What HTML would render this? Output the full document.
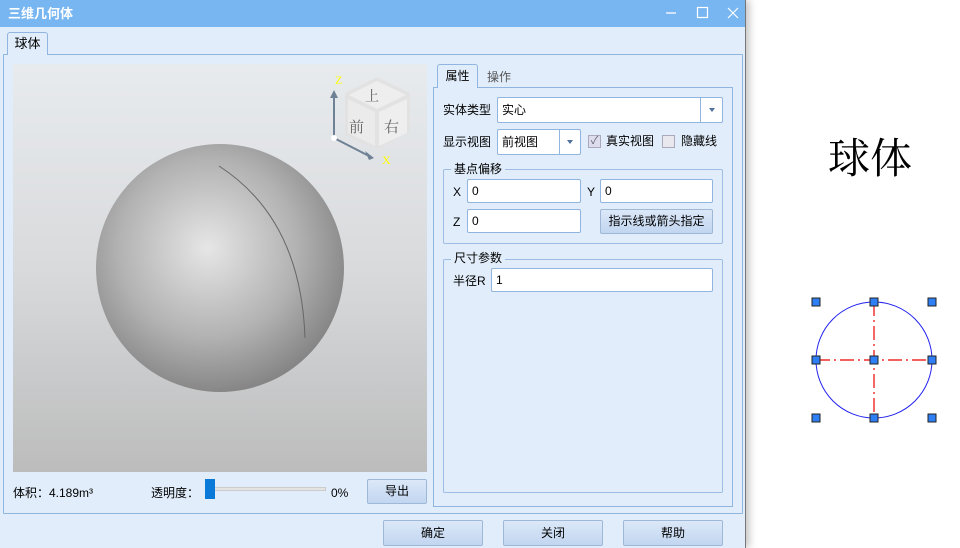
<!DOCTYPE html>
<html><head><meta charset="utf-8"><style>
*{box-sizing:border-box;margin:0;padding:0}
body{width:960px;height:548px;background:#fff;position:relative;overflow:hidden;font-family:"Liberation Sans","Noto Sans CJK SC",sans-serif;font-size:12px;color:#000}
.a{position:absolute}
.win{left:0;top:0;width:746px;height:548px;background:#e1edfa;border-right:1px solid #777;box-shadow:3px 0 8px rgba(0,0,0,.25)}
.title{left:0;top:0;width:745px;height:27px;background:#78b6f2;color:#fff;font-weight:bold;font-size:13px;line-height:27px;padding-left:8px}
.bd{border:1px solid #8fb5e0}
.inp{background:#fff;border:1px solid #8fb5e0;border-radius:2px;height:24px;line-height:22px;padding-left:4px}
.btn{border:1px solid #9fb8d8;border-radius:2px;background:linear-gradient(#dbe8f8,#c2d6f0);text-align:center;line-height:24px;height:26px}
.grp{border:1px solid #9fbde3;border-radius:2px}
.lg{background:#e1edfa;padding:0 3px}
.l{line-height:14px}
</style></head><body>
<div class="a win">
<div class="a title">三维几何体</div>
<svg class="a" style="left:0;top:0" width="745" height="27"><line x1="666" y1="13" x2="676" y2="13" stroke="#cfe3fb" stroke-width="2"/><rect x="697.5" y="7.5" width="10" height="10" fill="none" stroke="#fff" stroke-width="1.2"/><path d="M728 8l10 10M738 8l-10 10" stroke="#fff" stroke-width="1.2"/></svg>
<div class="a bd" style="left:3px;top:54px;width:740px;height:460px;border-radius:1px"></div>
<div class="a" style="left:7px;top:32px;width:41px;height:23px;border:1px solid #8fb5e0;border-bottom:none;background:#e1edfa;border-radius:3px 3px 0 0;text-align:center;line-height:22px;font-size:13px">球体</div>
<div class="a" style="left:13px;top:64px;width:414px;height:408px;background:linear-gradient(#e8ebee,#d8dadc 50%,#bcbcbc)"></div>
<svg class="a" style="left:13px;top:64px" width="414" height="408">
<defs><radialGradient id="g" cx="0.45" cy="0.42" r="0.6"><stop offset="0" stop-color="#e6e6e6"/><stop offset="0.6" stop-color="#b2b2b2"/><stop offset="1" stop-color="#838383"/></radialGradient></defs>
<circle cx="207" cy="204" r="124" fill="url(#g)"/>
<path d="M206 102 Q288 155 292 274" fill="none" stroke="#666" stroke-width="1"/>
<polygon points="364,13 397,29 397,67 364,86 332,71 332,29" fill="#e2e2e2"/>
<polygon points="364,17 393,31 364,45 336,31" fill="#eeeeee"/>
<polygon points="335,35 362,48 362,82 335,69" fill="#ebebeb"/>
<polygon points="366,48 394,35 394,69 366,82" fill="#eeeeee"/>
<text x="352" y="37" font-size="14" fill="#666" font-family="Noto Serif CJK SC,serif">上</text>
<text x="336" y="68" font-size="15" fill="#666" font-family="Noto Serif CJK SC,serif">前</text>
<text x="371" y="68" font-size="15" fill="#666" font-family="Noto Serif CJK SC,serif">右</text>
<line x1="321" y1="74" x2="321" y2="32" stroke="#6f8194" stroke-width="2"/><polygon points="317,34 325,34 321,26" fill="#6f8194"/>
<line x1="321" y1="74" x2="356" y2="92" stroke="#6f8194" stroke-width="2"/><polygon points="352,87 356,96 361,94" fill="#6f8194"/>
<circle cx="321" cy="74" r="3" fill="#fff"/>
<text x="322" y="20" font-size="12" fill="#ff0" font-family="Liberation Serif">Z</text>
<text x="369" y="100" font-size="12" fill="#ff0" font-family="Liberation Serif">X</text>
</svg>
<div class="a l" style="left:13px;top:486px">体积：4.189m³</div>
<div class="a l" style="left:151px;top:486px">透明度：</div>
<div class="a" style="left:210px;top:487px;width:116px;height:4px;background:#e4e4e4;border:1px solid #ccc"></div>
<div class="a" style="left:205px;top:479px;width:10px;height:20px;background:#0a79d8"></div>
<div class="a l" style="left:331px;top:486px">0%</div>
<div class="a btn" style="left:367px;top:479px;width:60px;height:25px;line-height:23px">导出</div>
<div class="a bd" style="left:433px;top:87px;width:300px;height:420px"></div>
<div class="a" style="left:437px;top:64px;width:41px;height:24px;border:1px solid #8fb5e0;border-bottom:none;background:#e1edfa;border-radius:3px 3px 0 0;text-align:center;line-height:23px">属性</div>
<div class="a l" style="left:487px;top:70px;color:#555">操作</div>
<div class="a l" style="left:443px;top:103px">实体类型</div>
<div class="a inp" style="left:497px;top:97px;width:226px;height:26px;line-height:24px">实心</div>
<div class="a" style="left:700px;top:98px;width:1px;height:24px;background:#8fb5e0"></div>
<div class="a" style="left:709px;top:108px;border:3px solid transparent;border-top:4px solid #5070a0"></div>
<div class="a l" style="left:443px;top:135px">显示视图</div>
<div class="a inp" style="left:497px;top:129px;width:84px;height:26px;line-height:24px">前视图</div>
<div class="a" style="left:559px;top:130px;width:1px;height:24px;background:#8fb5e0"></div>
<div class="a" style="left:567px;top:140px;border:3px solid transparent;border-top:4px solid #5070a0"></div>
<div class="a" style="left:588px;top:135px;width:13px;height:13px;border:1px solid #aab;background:#dde;color:#667;font-size:11px;line-height:11px;text-align:center">✓</div>
<div class="a l" style="left:606px;top:134px">真实视图</div>
<div class="a" style="left:662px;top:135px;width:13px;height:13px;border:1px solid #aab;background:#e8e8ee"></div>
<div class="a l" style="left:681px;top:134px">隐藏线</div>
<div class="a grp" style="left:443px;top:169px;width:280px;height:75px"></div>
<div class="a lg l" style="left:451px;top:162px">基点偏移</div>
<div class="a l" style="left:453px;top:185px">X</div>
<div class="a inp" style="left:467px;top:179px;width:114px">0</div>
<div class="a l" style="left:587px;top:185px">Y</div>
<div class="a inp" style="left:600px;top:179px;width:113px">0</div>
<div class="a l" style="left:453px;top:215px">Z</div>
<div class="a inp" style="left:467px;top:209px;width:114px">0</div>
<div class="a btn" style="left:600px;top:209px;width:113px;height:25px;line-height:23px">指示线或箭头指定</div>
<div class="a grp" style="left:443px;top:259px;width:280px;height:234px"></div>
<div class="a lg l" style="left:451px;top:251px">尺寸参数</div>
<div class="a l" style="left:453px;top:274px">半径R</div>
<div class="a inp" style="left:491px;top:268px;width:222px">1</div>
<div class="a btn" style="left:383px;top:520px;width:100px">确定</div>
<div class="a btn" style="left:503px;top:520px;width:100px">关闭</div>
<div class="a btn" style="left:623px;top:520px;width:100px">帮助</div>
</div>
<div class="a" style="left:828px;top:132px;font-size:42px;font-family:'Noto Serif CJK SC',serif;line-height:48px">球体</div>
<svg class="a" style="left:800px;top:290px" width="150" height="140">
<circle cx="74" cy="70" r="58" fill="none" stroke="#2222ee" stroke-width="1"/>
<path d="M74 12V128M16 70H132" stroke="#e00" stroke-width="1.2" stroke-dasharray="14,4,2,4"/>
<g fill="#2e7ff5" stroke="#222" stroke-width="1">
<rect x="12" y="8" width="8" height="8"/><rect x="70" y="8" width="8" height="8"/><rect x="128" y="8" width="8" height="8"/>
<rect x="12" y="66" width="8" height="8"/><rect x="70" y="66" width="8" height="8"/><rect x="128" y="66" width="8" height="8"/>
<rect x="12" y="124" width="8" height="8"/><rect x="70" y="124" width="8" height="8"/><rect x="128" y="124" width="8" height="8"/>
</g></svg>
</body></html>
